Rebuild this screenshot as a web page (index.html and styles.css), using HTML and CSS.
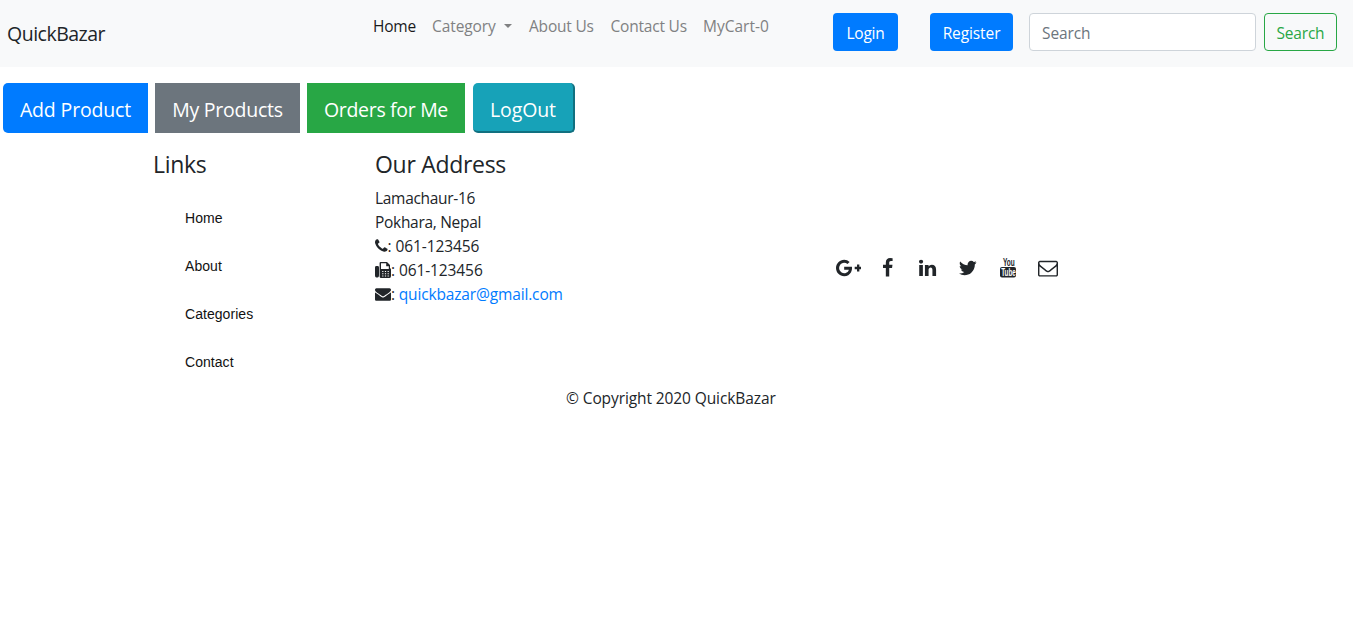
FILE: index.html
```html
<!DOCTYPE html>
<html lang="en">
<head>
<meta charset="utf-8">
<title>QuickBazar</title>
<link rel="stylesheet" href="styles.css">
</head>
<body>
<nav class="navbar">
  <a class="brand"><span>QuickBazar</span></a>
  <ul class="nav-links">
    <li class="nav-home active"><span>Home</span></li>
    <li class="nav-category"><span>Category</span><i class="caret"></i></li>
    <li class="nav-about"><span>About Us</span></li>
    <li class="nav-contact"><span>Contact Us</span></li>
    <li class="nav-cart"><span>MyCart-0</span></li>
  </ul>
  <a class="btn login"><span>Login</span></a>
  <a class="btn register"><span>Register</span></a>
  <form class="search">
    <input class="search-input" type="text" placeholder="Search">
    <button class="btn search-button" type="button"><span>Search</span></button>
  </form>
</nav>
<div class="actions">
  <a class="action add"><span>Add Product</span></a>
  <a class="action mine"><span>My Products</span></a>
  <a class="action orders"><span>Orders for Me</span></a>
  <button class="action logout" type="button"><span>LogOut</span></button>
</div>
<footer>
  <div class="columns">
    <section class="links">
      <h5><span>Links</span></h5>
      <ul>
        <li>Home</li>
        <li>About</li>
        <li>Categories</li>
        <li>Contact</li>
      </ul>
    </section>
    <section class="address">
      <h5><span>Our Address</span></h5>
      <address>
        <div><span class="place">Lamachaur-16</span></div>
        <div><span class="place">Pokhara, Nepal</span></div>
        <div><svg class="phone" viewBox="0 0 1408 1792"><path d="M1408 1240q0 27-10 70.5t-21 68.5q-21 50-122 106-94 51-186 51-27 0-53-3.5t-57.5-12.5-47-14.5-55.5-20.5-49-18q-98-35-175-83-127-79-264-216t-216-264q-48-77-83-175-3-9-18-49t-20.5-55.5-14.5-47-12.5-57.5-3.5-53q0-92 51-186 56-101 106-122 25-11 68.500-21t70.500-10q14 0 21 3 18 6 53 76 11 19 30 54t35 63.500 31 53.500q3 4 17.500 25t21.500 35.500 7 28.500q0 20-28.500 50t-62 55-62 53-28.500 46q0 9 5 22.500t8.500 20.500 14 24 11.500 19q76 137 174 235t235 174q2 1 19 11.500t24 14 20.500 8.500 22.500 5q18 0 46-28.500t53-62 55-62 50-28.500q14 0 28.500 7t35.500 21.500 25 17.500q25 15 53.500 31t63.500 35 54 30q70 35 76 53 3 7 3 21z"/></svg><span class="number">: 061-123456</span></div>
        <div><svg viewBox="0 0 16 16"><path fill-rule="evenodd" d="M1.400 4h1.200Q4 4 4 5.400v8.200Q4 15.500 2.600 15.500H1.400Q0 15.500 0 13.600V5.400Q0 4 1.400 4zM4.600 1q0-1 1-1H12l3 3v3q1 .6 1 1.600v6.400Q16 16 14.500 16h-8.400Q4.600 16 4.600 14.500zM6 1.200v5.800h7.800V4.200h-2.600v-3zM7.200 9v1.100h1.200V9zm2.700 0v1.100h1.200V9zm2.700 0v1.100h1.200V9zM7.200 11.200v1.100h1.200v-1.100zm2.700 0v1.100h1.200v-1.100zm2.700 0v1.100h1.200v-1.100zM7.200 13.400v1.100h1.200v-1.100zm2.700 0v1.100h1.200v-1.100zm2.700 0v1.100h1.200v-1.100z"/></svg><span class="number">: 061-123456</span></div>
        <div><svg viewBox="0 0 1792 1792"><path d="M1792 710v794q0 66-47 113t-113 47h-1472q-66 0-113-47t-47-113v-794q44 49 101 87 362 246 497 345 57 42 92.500 65.500t94.500 48 110 24.500h2q51 0 110-24.500t94.500-48 92.500-65.500q170-123 498-345 57-39 100-87zm0-294q0 79-49 151t-122 123q-376 261-468 325-10 7-42.500 31t-54 38.500-52 32.500-57.500 27-50 9h-2q-23 0-50-9t-57.500-27-52-32.500-54-38.500-42.500-31q-91-64-262-182.500t-205-142.500q-62-42-117-115.500t-55-136.500q0-78 41.500-130t118.500-52h1472q65 0 112.500 47t47.500 113z"/></svg><span>: </span><a class="mail">quickbazar@gmail.com</a></div>
      </address>
    </section>
    <div class="social">
      <svg class="google" viewBox="0 0 2304 1792"><path d="M1437 913q0 208-87 370.500t-248 254-369 91.500q-149 0-285-58t-234-156-156-234-58-285 58-285 156-234 234-156 285-58q286 0 491 192l-199 191q-117-113-292-113-123 0-227.500 62t-165.500 168.500-61 232.500 61 232.500 165.500 168.500 227.500 62q83 0 152.500-23t114.500-57.500 78.500-78.500 49-83 21.500-74h-416v-252h692q12 63 12 122zm867-122v210h-209v209h-210v-209h-209v-210h209v-209h210v209h209z"/></svg>
      <svg class="facebook" viewBox="479 0 864 1792"><path d="M1343 12v264h-157q-86 0-116 36t-30 108v189h293l-39 296h-254v759h-306v-759h-255v-296h255v-218q0-186 104-288.500t277-102.500q147 0 228 12z"/></svg>
      <svg class="linkedin" viewBox="128 0 1536 1792"><path d="M477 625v991h-330v-991h330zm21-306q1 73-50.500 122t-135.500 49h-2q-82 0-132-49t-50-122q0-74 51.500-122.500t134.500-48.500 133 48.500 51 122.500zm1166 729v568h-329v-530q0-105-40.500-164.500t-126.500-59.500q-63 0-105.500 34.500t-63.500 85.500q-11 30-11 81v553h-329q2-399 2-647t-1-296l-1-48h329v144h-2q20-32 41-56t56.500-52 87-43.500 114.500-15.500q171 0 275 113.500t104 332.500z"/></svg>
      <svg class="twitter" viewBox="108 0 1576 1792"><path d="M1684 408q-67 98-162 167 1 14 1 42 0 130-38 259.500t-115.500 248.500-184.500 210.500-258 146-323 54.500q-271 0-496-145 35 4 78 4 225 0 401-138-105-2-188-64.500t-114-159.500q33 5 61 5 43 0 85-11-112-23-185.500-111.500t-73.500-205.500v-4q68 38 146 41-66-44-105-115t-39-154q0-88 44-163 121 149 294.500 238.500t371.500 99.500q-8-38-8-74 0-134 94.500-228.500t228.500-94.500q140 0 236 102 109-21 205-78-37 115-142 178 93-10 186-50z"/></svg>
      <svg class="youtube" viewBox="0 0 16 20"><text transform="translate(3 8) scale(.62 1)" font-size="10.500">You</text><rect y="9" width="16" height="10.400" rx="2"/><text class="tube" transform="translate(1.200 18) scale(.6 1)" font-size="10.500">Tube</text></svg>
      <svg class="envelope" viewBox="0 0 1792 1792"><path d="M1664 1504v-768q-32 36-69 66-268 206-426 338-51 43-83 67t-86.500 48.500-102.500 24.500h-2q-48 0-102.500-24.500t-86.500-48.500-83-67q-158-132-426-338-37-30-69-66v768q0 13 9.500 22.500t22.500 9.500h1472q13 0 22.500-9.500t9.500-22.500zm0-1051v-24.500l-.5-13-3-12.500-5.500-9-9-7.500-14-2.500h-1472q-13 0-22.500 9.500t-9.500 22.500q0 168 147 284 193 152 401 317 6 5 35 29.500t46 37.500 44.500 31.500 50.500 27.500 43 9h2q20 0 43-9t50.500-27.500 44.500-31.500 46-37.500 35-29.500q208-165 401-317 54-43 100.500-115.500t46.500-131.500zm128-37v1088q0 66-47 113t-113 47h-1472q-66 0-113-47t-47-113v-1088q0-66 47-113t113-47h1472q66 0 113 47t47 113z"/></svg>
    </div>
  </div>
  <p class="copyright"><span>© Copyright 2020 QuickBazar</span></p>
</footer>
</body>
</html>
```

FILE: styles.css
```css
* { box-sizing: border-box; }
body { margin: 0; background: #fff; color: #212529; font: 15.5px/24px "Open Sans", sans-serif; letter-spacing: -.2px; }
ul, p, h5 { margin: 0; padding: 0; list-style: none; }
svg { display: block; fill: #212529; }

.navbar { display: flex; align-items: flex-start; height: 67px; padding: 13px 16px 0 7px; background: #f8f9fa; }
.brand { width: 366px; padding-top: 6px; font-size: 19.5px; line-height: 30px; letter-spacing: -.5px; }
.nav-links { display: flex; width: 460px; padding-top: 1px; color: #808182; white-space: nowrap; }
.active { color: #1a1a1b; }
.nav-home { width: 59px; }
.nav-category { display: flex; align-items: center; width: 97px; letter-spacing: -.08px; }
.caret { margin-left: 8px; border: 4.800px solid transparent; border-top-color: #808182; border-bottom: 0; }
.nav-about { width: 81.500px; }
.nav-contact { width: 92.500px; }
.nav-cart { letter-spacing: 0; }
.btn { display: flex; align-items: center; justify-content: center; height: 38px; padding: 2px 0 0; border-radius: 4px; background: #007bff; color: #fff; }
.login { width: 65px; margin-right: 32px; }
.register { width: 83px; margin-right: 16px; letter-spacing: -.1px; }
.search { display: flex; gap: 8px; }
.search-input { width: 227px; height: 38px; padding: 2px 12px 0; border: 1px solid #ced4da; border-radius: 4px; background: #fff; font: inherit; letter-spacing: -.1px; }
.search-input::placeholder { color: #6c757d; opacity: 1; }
.search-button { width: 73px; border: 1px solid #28a745; background: transparent; color: #28a745; font: inherit; letter-spacing: -.2px; }

.actions { display: flex; padding: 16px 3px 0; }
.action { display: flex; align-items: center; justify-content: center; height: 50px; padding: 4px 0 0; color: #fff; font: 19.5px/30px "Open Sans", sans-serif; letter-spacing: -.25px; }
.add { width: 145px; margin-right: 7px; border-radius: 5px 0 0 5px; background: #007bff; letter-spacing: -.15px; }
.mine { width: 145px; margin-right: 7px; background: #6c757d; }
.orders { width: 158px; margin-right: 8px; background: #28a745; letter-spacing: -.32px; }
.logout { width: 102px; padding: 6px 0 0; border: solid #117080; border-width: 0 2px 2px 0; border-radius: 5px; background: #17a2b8; letter-spacing: -.1px; }

.columns { display: flex; height: 253px; padding: 15px 0 0 153px; }
h5 { font-size: 23px; font-weight: 400; line-height: 32px; letter-spacing: -.3px; }
.links { width: 222px; }
.links ul { padding: 22px 0 0 32px; }
.links li { height: 48px; color: #111; font: 14px/32px "Liberation Sans", Arial, sans-serif; letter-spacing: .05px; }
.address { width: 460.500px; }
address { padding-top: 6px; font-style: normal; }
address div { display: flex; align-items: center; white-space: pre; }
address svg { width: 16px; height: 16px; }
address .phone { width: 12.600px; }
.place { letter-spacing: -.3px; }
.number { letter-spacing: -.1px; }
.mail { color: #007bff; letter-spacing: -.15px; }
.social { display: flex; padding-top: 110px; }
.social svg { height: 20px; }
.google { width: 25.700px; margin-right: 22.300px; }
.facebook { width: 9.600px; margin-right: 26.400px; }
.linkedin { width: 17.100px; margin-right: 22.900px; }
.twitter { width: 17.600px; margin-right: 23.200px; }
.social .youtube { width: 16px; margin-right: 22px; overflow: visible; font-family: "Liberation Sans", sans-serif; font-weight: 700; letter-spacing: 0; }
.tube { fill: #fff; }
.envelope { width: 20px; }
.copyright { padding-left: 566px; letter-spacing: -.1px; }
```
